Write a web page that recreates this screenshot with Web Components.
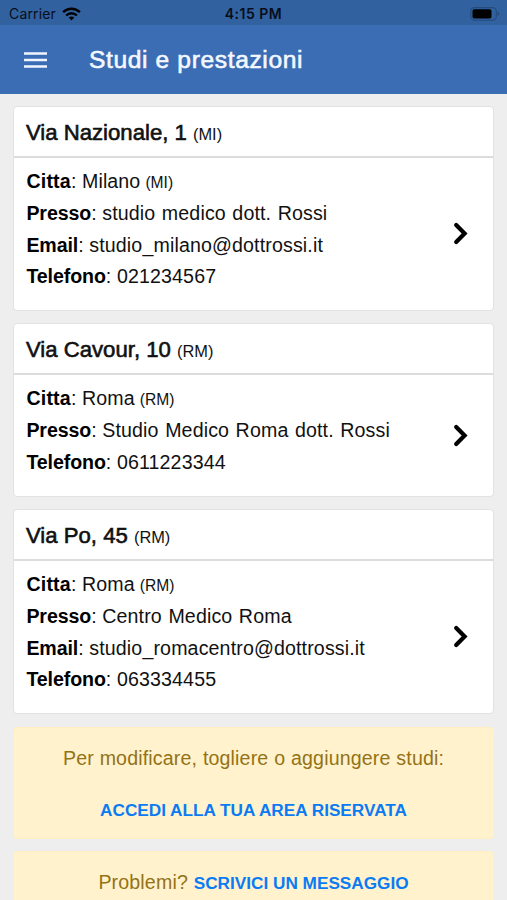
<!DOCTYPE html>
<html lang="it">
<head>
<meta charset="utf-8">
<title>Studi e prestazioni</title>
<style>
html,body{margin:0;height:900px;overflow:hidden;background:#eeeeee;font-family:"Liberation Sans",Arial,sans-serif;color:#111}
</style>
</head>
<body>
<studi-app></studi-app>
<script>
function define(name, html){
  const tpl=document.createElement('template');
  tpl.innerHTML=html;
  customElements.define(name,class extends HTMLElement{
    constructor(){super();this.attachShadow({mode:'open'}).append(tpl.content.cloneNode(true));}
  });
}

define('status-bar',`
<style>
:host{display:grid;grid-template-columns:1fr auto 1fr;align-items:center;height:25px;box-sizing:border-box;padding:2px 7px 0 9px;background:#3261a0;color:#070e1a;font-family:Inter,"Liberation Sans",sans-serif;font-size:14px;line-height:22px}
.l{display:flex;align-items:center;gap:6px;letter-spacing:.15px}
.t{font-weight:600;letter-spacing:.5px;margin-right:2px}
svg{display:block}
.b{justify-self:end}
</style>
<div class="l"><span>Carrier</span><svg width="19" height="14" viewBox="0 0 19 14" fill="none" stroke="#000"><path d="M1.1 5.2C5.9.5 13.1.5 17.9 5.2" stroke-width="2.5"/><path d="M4.1 8.5c3.1-3 7.7-3 10.8 0" stroke-width="2.3"/><path d="M9.5 13.4 6.7 10.6c1.6-1.4 4-1.4 5.6 0z" fill="#000" stroke="none"/></svg></div>
<div class="t">4:15 PM</div>
<svg class="b" width="30" height="14" viewBox="0 0 30 14"><rect x=".8" y=".6" width="25.5" height="12.6" rx="3.6" fill="none" stroke="#254a7d" stroke-width="1.1"/><rect x="2.5" y="2.3" width="19" height="9.2" rx="1.8" fill="#000"/><path d="M27.6 4.8c2.2.7 2.2 3.5 0 4.2z" fill="#254a7d"/></svg>`);

define('nav-bar',`
<style>
:host{display:flex;align-items:center;height:69px;box-sizing:border-box;padding:1px 24px 0;gap:42px;background:#3a6db4;color:#f4f8ff}
svg{display:block}
h1{margin:0;font-size:24.6px;font-weight:400;letter-spacing:.62px;line-height:32px;-webkit-text-stroke:.6px #f4f8ff}
</style>
<svg width="23" height="16" viewBox="0 0 23 16"><path d="M0 1.5h23M0 8h23M0 14.5h23" stroke="#f0f5fd" stroke-width="2.7"/></svg>
<h1><slot></slot></h1>`);

define('info-row',`
<style>
:host{display:block;font-size:19.6px;line-height:31.6px;letter-spacing:.1px;white-space:nowrap}
b{letter-spacing:-.1px;color:#000}
.v{word-spacing:.9px;letter-spacing:.14px}
:host(.city) b{letter-spacing:.2px}
:host(.city) .v{word-spacing:-.5px;letter-spacing:.1px}
::slotted(small){font-size:15.6px;letter-spacing:0}
</style><b><slot name="k"></slot></b>: <span class="v"><slot></slot></span>`);

define('studio-card',`
<style>
:host{display:flex;flex-direction:column;background:#fff;border:1px solid #e2e2e2;border-radius:4px;box-sizing:border-box}
header{height:51px;box-sizing:border-box;border-bottom:2px solid #dcdcdc;padding:10px 12px 0;font-size:22.15px;line-height:32px;white-space:nowrap}
.n{-webkit-text-stroke:.6px #111}
.p{font-size:16.4px}
.body{flex:1;display:flex;justify-content:space-between;padding:7.6px 25px 0 12.4px}
svg{display:block;align-self:center;margin-top:-8px}
</style>
<header><span class="n"><slot name="name"></slot></span> <span class="p"><slot name="prov"></slot></span></header>
<div class="body"><div><slot></slot></div>
<svg width="15" height="23" viewBox="0 0 15 23"><path d="M3.2 3 11.6 11.5 3.2 20" fill="none" stroke="#000" stroke-width="4.2" stroke-linecap="round"/></svg></div>`);

define('notice-box',`
<style>
:host{display:flex;flex-direction:column;align-items:center;box-sizing:border-box;background:#fff2cc;border:1px solid #ffeec0;border-radius:4px;color:#947216;font-size:19.6px;line-height:32px;letter-spacing:.15px;word-spacing:.2px;padding-top:14px;white-space:nowrap}
</style><slot></slot>`);

define('link-action',`
<style>:host{display:inline;color:#0b7bf4;font-size:17.2px;font-weight:700;letter-spacing:0;word-spacing:0}</style><slot></slot>`);

define('studi-app',`
<style>
:host{display:block;height:900px;overflow:hidden}
main{display:flex;flex-direction:column;padding:12px 13px 0}
.a{height:205px}.b{height:174px;margin-top:12px}.c{height:205px;margin-top:12px}
.n1{height:112px;margin-top:13px}.n2{height:113px;margin-top:12px;padding-top:14px}
.n1 div+div{margin-top:19px}
</style>
<status-bar></status-bar>
<nav-bar>Studi e prestazioni</nav-bar>
<main>
<studio-card class="a"><span slot="name">Via Nazionale, 1</span><span slot="prov">(MI)</span>
<info-row class="city"><span slot="k">Citta</span>Milano <small>(MI)</small></info-row>
<info-row><span slot="k">Presso</span>studio medico dott. Rossi</info-row>
<info-row><span slot="k">Email</span>studio_milano@dottrossi.it</info-row>
<info-row><span slot="k">Telefono</span>021234567</info-row></studio-card>
<studio-card class="b"><span slot="name">Via Cavour, 10</span><span slot="prov">(RM)</span>
<info-row class="city"><span slot="k">Citta</span>Roma <small>(RM)</small></info-row>
<info-row><span slot="k">Presso</span>Studio Medico Roma dott. Rossi</info-row>
<info-row><span slot="k">Telefono</span>0611223344</info-row></studio-card>
<studio-card class="c"><span slot="name">Via Po, 45</span><span slot="prov">(RM)</span>
<info-row class="city"><span slot="k">Citta</span>Roma <small>(RM)</small></info-row>
<info-row><span slot="k">Presso</span>Centro Medico Roma</info-row>
<info-row><span slot="k">Email</span>studio_romacentro@dottrossi.it</info-row>
<info-row><span slot="k">Telefono</span>063334455</info-row></studio-card>
<notice-box class="n1"><div>Per modificare, togliere o aggiungere studi:</div><div><link-action>ACCEDI ALLA TUA AREA RISERVATA</link-action></div></notice-box>
<notice-box class="n2"><div>Problemi? <link-action>SCRIVICI UN MESSAGGIO</link-action></div></notice-box>
</main>`);
</script>
</body>
</html>
